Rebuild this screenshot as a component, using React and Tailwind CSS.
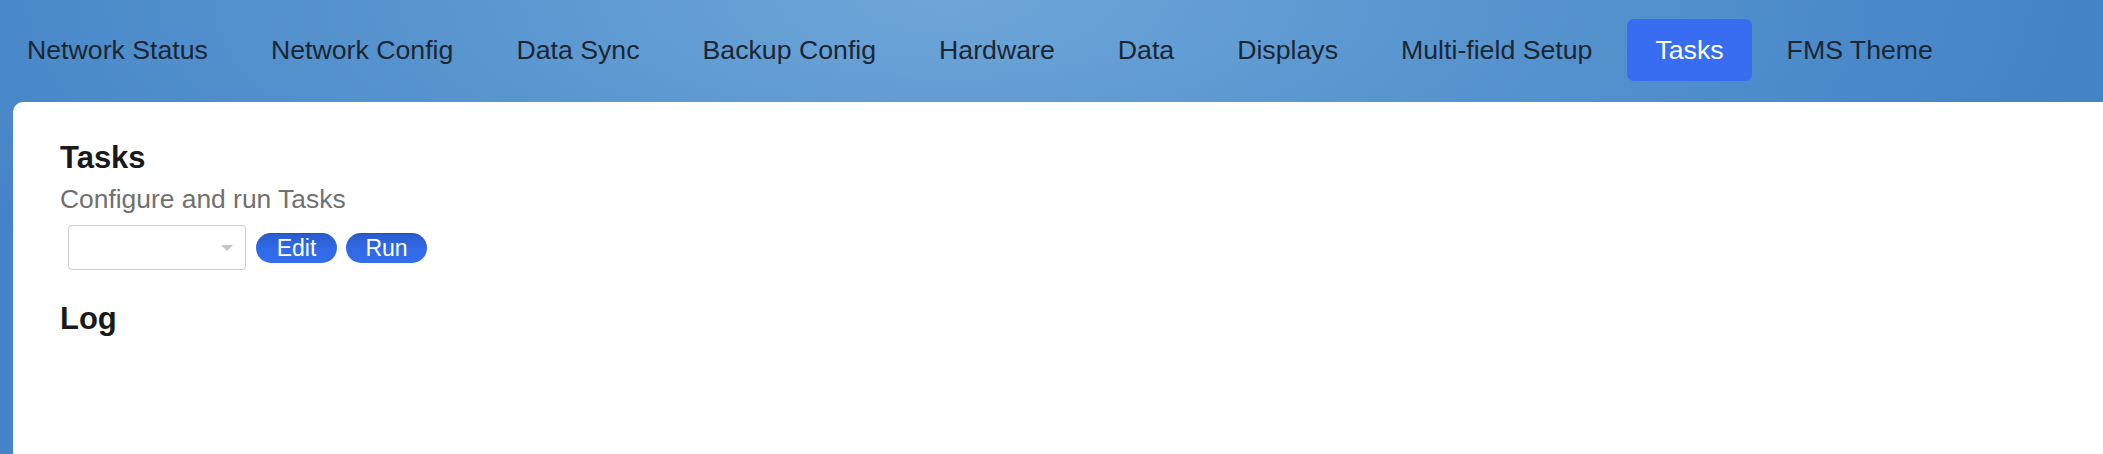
import React from "react";

const tabs = [
  "Network Status",
  "Network Config",
  "Data Sync",
  "Backup Config",
  "Hardware",
  "Data",
  "Displays",
  "Multi-field Setup",
  "Tasks",
  "FMS Theme",
];

const PillButton = ({ children }) => (
  <button className="w-[81px] h-[30px] rounded-full bg-gradient-to-b from-[#2a5ccc] via-[#3169e6] to-[#336ded] text-white text-[23px] leading-none border-t border-[#2450b8]">
    {children}
  </button>
);

export default function App() {
  return (
    <div
      className="w-[2103px] h-[454px] overflow-hidden flex flex-col bg-[radial-gradient(ellipse_55%_90%_at_45%_0%,#6ea6d8_0%,#5895cf_45%,#4383c6_100%)]"
      style={{ fontFamily: '"Liberation Sans", Arial, sans-serif' }}
    >
      {/* Tabs */}
      <nav className="flex items-center gap-[7px] h-[102px] pb-[2px]">
        {tabs.map((t) =>
          t === "Tasks" ? (
            <div
              key={t}
              className="h-[62px] flex items-center px-[28px] rounded-[7px] bg-[#386cf1] text-white text-[26.7px]"
            >
              {t}
            </div>
          ) : (
            <div
              key={t}
              className="h-[62px] flex items-center px-[28px] first:pl-[27px] text-[#1c2633] text-[26.7px]"
            >
              {t}
            </div>
          )
        )}
      </nav>

      {/* Panel */}
      <div className="ml-[13px] flex-1 bg-white rounded-tl-[10px] pl-[47px] pt-[38px]">
        <h3 className="text-[31px] font-bold text-[#1a1a1a] leading-[36px]">Tasks</h3>
        <p className="mt-[7px] text-[26.4px] text-[#707070] leading-[32px]">Configure and run Tasks</p>
        <div className="mt-[10px] ml-[8px] flex items-center">
          <div className="relative w-[178px] h-[45px] border border-[#cccccc] rounded-[4px] bg-white">
            <span className="absolute right-[12px] top-[19px] w-0 h-0 border-l-[6px] border-r-[6px] border-t-[6px] border-l-transparent border-r-transparent border-t-[#c4c4c4]" />
          </div>
          <div className="ml-[10px] flex gap-[9px]">
            <PillButton>Edit</PillButton>
            <PillButton>Run</PillButton>
          </div>
        </div>
        <h3 className="mt-[31px] text-[31px] font-bold text-[#1a1a1a] leading-[36px]">Log</h3>
      </div>
    </div>
  );
}
